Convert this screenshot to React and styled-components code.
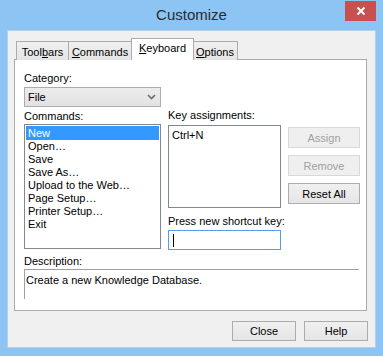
import React from "react";
import styled, { createGlobalStyle, css } from "styled-components";

const Global = createGlobalStyle`
  html, body { margin: 0; padding: 0; }
  body { width: 383px; height: 356px; overflow: hidden; font-family: "Liberation Sans", Arial, sans-serif; }
`;

const Frame = styled.div`
  width: 383px;
  height: 356px;
  box-sizing: border-box;
  background: #8cc4f4;
  display: flex;
  flex-direction: column;
  padding: 0 7px 8px 7px;
  position: relative;
`;

const TitleBar = styled.div`
  height: 30px;
  display: flex;
  align-items: center;
  justify-content: center;
  font-size: 15px;
  color: #2b2b2b;
  padding-bottom: 1px;
  box-sizing: border-box;
`;

const CloseX = styled.div`
  position: absolute;
  top: 1px;
  right: 7px;
  width: 31px;
  height: 20px;
  background: #c75050;
  display: flex;
  align-items: center;
  justify-content: center;
`;

const Client = styled.div`
  flex: 1;
  background: #f0f0f0;
  border: 1px solid #b9cde3;
  display: flex;
  flex-direction: column;
  padding: 8px 8px 0 6px;
  box-sizing: border-box;
`;

const TabStrip = styled.div`
  display: flex;
  align-items: flex-end;
  padding-left: 3px;
  height: 21px;
  position: relative;
  z-index: 1;
  margin-bottom: -1px;
`;

const Tab = styled.div`
  box-sizing: border-box;
  width: ${(p) => p.$w}px;
  height: 19px;
  border: 1px solid #acacac;
  border-bottom: none;
  margin-left: -1px;
  background: linear-gradient(#f0f0f0, #e5e5e5);
  font-size: 11px;
  color: #000;
  text-align: center;
  padding-top: 4px;
  line-height: 13px;
  white-space: nowrap;
  ${(p) =>
    p.$active &&
    css`
      height: 22px;
      background: #fff;
      padding-top: 3px;
      margin-right: -1px;
      position: relative;
      z-index: 2;
    `}
`;

const U = styled.span`
  text-decoration: underline;
  text-underline-offset: 1px;
`;

const Panel = styled.div`
  box-sizing: border-box;
  width: 353px;
  height: 252px;
  border: 1px solid #acacac;
  background: #fff;
  padding: 11px 6px 0 9px;
  display: flex;
  flex-direction: column;
  font-size: 11px;
`;

const TopRow = styled.div`
  display: flex;
  gap: 7px;
`;

const Column = styled.div`
  display: flex;
  flex-direction: column;
  flex: none;
  width: ${(p) => p.$w}px;
  padding-top: ${(p) => p.$top || 0}px;
`;

const Label = styled.div`
  height: 14px;
  line-height: 14px;
  color: #000;
  white-space: nowrap;
  margin-top: ${(p) => p.$mt || 0}px;
  margin-bottom: ${(p) => p.$mb || 0}px;
`;

const Combo = styled.div`
  box-sizing: border-box;
  height: 20px;
  border: 1px solid #acacac;
  background: linear-gradient(#ececec, #e2e2e2);
  display: flex;
  align-items: center;
  justify-content: space-between;
  padding: 0 4px 0 3px;
  margin-top: 2px;
  margin-bottom: 2px;
`;

const ListBox = styled.div`
  box-sizing: border-box;
  height: 125px;
  border: 1px solid #828790;
  background: #fff;
  padding: 1px;
  margin-top: 1px;
`;

const ListItem = styled.div`
  height: 13px;
  line-height: 13px;
  padding-left: 2px;
  ${(p) =>
    p.$selected &&
    css`
      background: #3399ff;
      color: #fff;
      height: 14px;
      line-height: 14px;
    `}
`;

const KeyBox = styled.div`
  box-sizing: border-box;
  height: 83px;
  border: 1px solid #828790;
  padding: 2px 3px;
  line-height: 14px;
  margin-top: 3px;
`;

const ShortcutInput = styled.div`
  box-sizing: border-box;
  height: 20px;
  border: 1px solid #569de5;
  margin-top: 2px;
  display: flex;
  align-items: center;
  padding-left: 4px;
`;

const Caret = styled.span`
  width: 1px;
  height: 13px;
  background: #000;
`;

const Button = styled.div`
  box-sizing: border-box;
  width: ${(p) => p.$w || 72}px;
  height: ${(p) => p.$h || 21}px;
  display: flex;
  align-items: center;
  justify-content: center;
  font-size: 11px;
  border: 1px solid #acacac;
  background: linear-gradient(#f0f0f0, #e5e5e5);
  color: #000;
  ${(p) =>
    p.$disabled &&
    css`
      border-color: #d9d9d9;
      background: #efefef;
      color: #a0a0a0;
    `}
`;

const ButtonStack = styled.div`
  display: flex;
  flex-direction: column;
  gap: 7px;
`;

const DescBox = styled.div`
  box-sizing: border-box;
  height: 30px;
  width: 335px;
  border-top: 1px solid #a0a0a0;
  border-left: 1px solid #a0a0a0;
  margin-top: 1px;
  padding: 3px 0 0 1px;
  line-height: 14px;
`;

const Footer = styled.div`
  display: flex;
  justify-content: flex-end;
  gap: 8px;
  padding-top: 10px;
  margin-right: -1px;
`;

const commands = [
  "New",
  "Open…",
  "Save",
  "Save As…",
  "Upload to the Web…",
  "Page Setup…",
  "Printer Setup…",
  "Exit",
];

export default function App() {
  return (
    <>
      <Global />
      <Frame>
        <TitleBar>Customize</TitleBar>
        <CloseX>
          <svg width="10" height="10" viewBox="0 0 10 10">
            <path d="M1.5 1.5 L8.5 8.5 M8.5 1.5 L1.5 8.5" stroke="#fff" strokeWidth="2" />
          </svg>
        </CloseX>
        <Client>
          <TabStrip>
            <Tab $w={53}>
              Tool<U>b</U>ars
            </Tab>
            <Tab $w={64}>
              <U>C</U>ommands
            </Tab>
            <Tab $w={63} $active>
              <U>K</U>eyboard
            </Tab>
            <Tab $w={46}>
              <U>O</U>ptions
            </Tab>
          </TabStrip>
          <Panel>
            <TopRow>
              <Column $w={137}>
                <Label>Category:</Label>
                <Combo>
                  <span>File</span>
                  <svg width="9" height="6" viewBox="0 0 9 6">
                    <path d="M1 1 L4.5 4.5 L8 1" stroke="#6d6d6d" strokeWidth="1.6" fill="none" />
                  </svg>
                </Combo>
                <Label>Commands:</Label>
                <ListBox>
                  {commands.map((c, i) => (
                    <ListItem key={c} $selected={i === 0}>
                      {c}
                    </ListItem>
                  ))}
                </ListBox>
              </Column>
              <Column $w={113} $top={37}>
                <Label>Key assignments:</Label>
                <KeyBox>Ctrl+N</KeyBox>
                <Label $mt={6}>Press new shortcut key:</Label>
                <ShortcutInput>
                  <Caret />
                </ShortcutInput>
              </Column>
              <Column $w={72} $top={56}>
                <ButtonStack>
                  <Button $disabled>Assign</Button>
                  <Button $disabled>Remove</Button>
                  <Button>Reset All</Button>
                </ButtonStack>
              </Column>
            </TopRow>
            <Label $mt={4}>Description:</Label>
            <DescBox>Create a new Knowledge Database.</DescBox>
          </Panel>
          <Footer>
            <Button $w={64} $h={20}>Close</Button>
            <Button $w={64} $h={20}>Help</Button>
          </Footer>
        </Client>
      </Frame>
    </>
  );
}
